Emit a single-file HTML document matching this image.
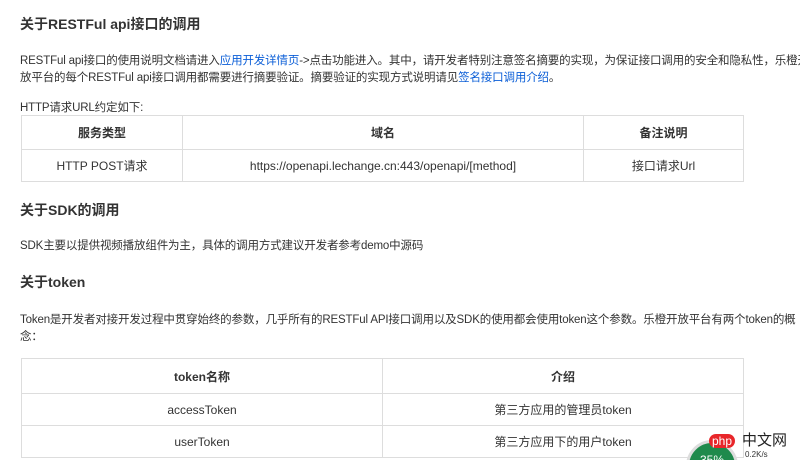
<!DOCTYPE html>
<html><head><meta charset="utf-8"><style>
html,body{margin:0;width:800px;height:460px;overflow:hidden}
body{background:#fff;font-family:"Liberation Sans","Noto Sans CJK SC",sans-serif;color:#333;position:relative}
.a{position:absolute;white-space:nowrap}
h{font-weight:bold;font-size:14px;color:#333}
.p{font-size:11.5px;line-height:17px;letter-spacing:-0.15px}
a{color:#0b5ed7;text-decoration:none}
table{position:absolute;border-collapse:collapse;font-size:12px;color:#333}
td,th{border:1px solid #ddd;text-align:center;padding:0}
th{font-weight:bold}
</style></head><body>
<div class="a" style="left:20px;top:14px"><h>关于RESTFul api接口的调用</h></div>
<div class="a p" style="left:20px;top:53px">RESTFul api接口的使用说明文档请进入<a>应用开发详情页</a>->点击功能进入。其中，请开发者特别注意签名摘要的实现，为保证接口调用的安全和隐私性，乐橙开<br>放平台的每个RESTFul api接口调用都需要进行摘要验证。摘要验证的实现方式说明请见<a>签名接口调用介绍</a>。</div>
<div class="a p" style="left:20px;top:100px">HTTP请求URL约定如下:</div>
<table style="left:21px;top:115px;width:723px">
<tr style="height:34px"><th style="width:160px">服务类型</th><th style="width:400px">域名</th><th>备注说明</th></tr>
<tr style="height:32px"><td>HTTP POST请求</td><td>https://openapi.lechange.cn:443/openapi/[method]</td><td>接口请求Url</td></tr>
</table>
<div class="a" style="left:20px;top:200px"><h>关于SDK的调用</h></div>
<div class="a p" style="left:20px;top:238px">SDK主要以提供视频播放组件为主，具体的调用方式建议开发者参考demo中源码</div>
<div class="a" style="left:20px;top:272px"><h>关于token</h></div>
<div class="a p" style="left:20px;top:312px">Token是开发者对接开发过程中贯穿始终的参数，几乎所有的RESTFul API接口调用以及SDK的使用都会使用token这个参数。乐橙开放平台有两个token的概<br>念：</div>
<table style="left:21px;top:358px;width:723px">
<tr style="height:35px"><th style="width:360px">token名称</th><th>介绍</th></tr>
<tr style="height:32px"><td>accessToken</td><td>第三方应用的管理员token</td></tr>
<tr style="height:32px"><td>userToken</td><td>第三方应用下的用户token</td></tr>
</table>
<div style="position:absolute;left:680px;top:425px;width:120px;height:35px;overflow:hidden">
<div class="a" style="left:6px;top:15px;width:46px;height:46px;border-radius:50%;background:#1f8a4c;border:3px solid #ddd;color:#fff;font-size:12px;text-align:center;line-height:34px">35%</div>
<div class="a" style="left:29px;top:9px;background:#e8262a;color:#fff;font-size:12px;padding:0 3px;border-radius:8px;line-height:14px">php</div>
<div class="a" style="left:62px;top:4px;font-size:15px;color:#222">中文网</div>
<div class="a" style="left:65px;top:25px;font-size:8px;color:#333">0.2K/s</div>
</div>
</body></html>
